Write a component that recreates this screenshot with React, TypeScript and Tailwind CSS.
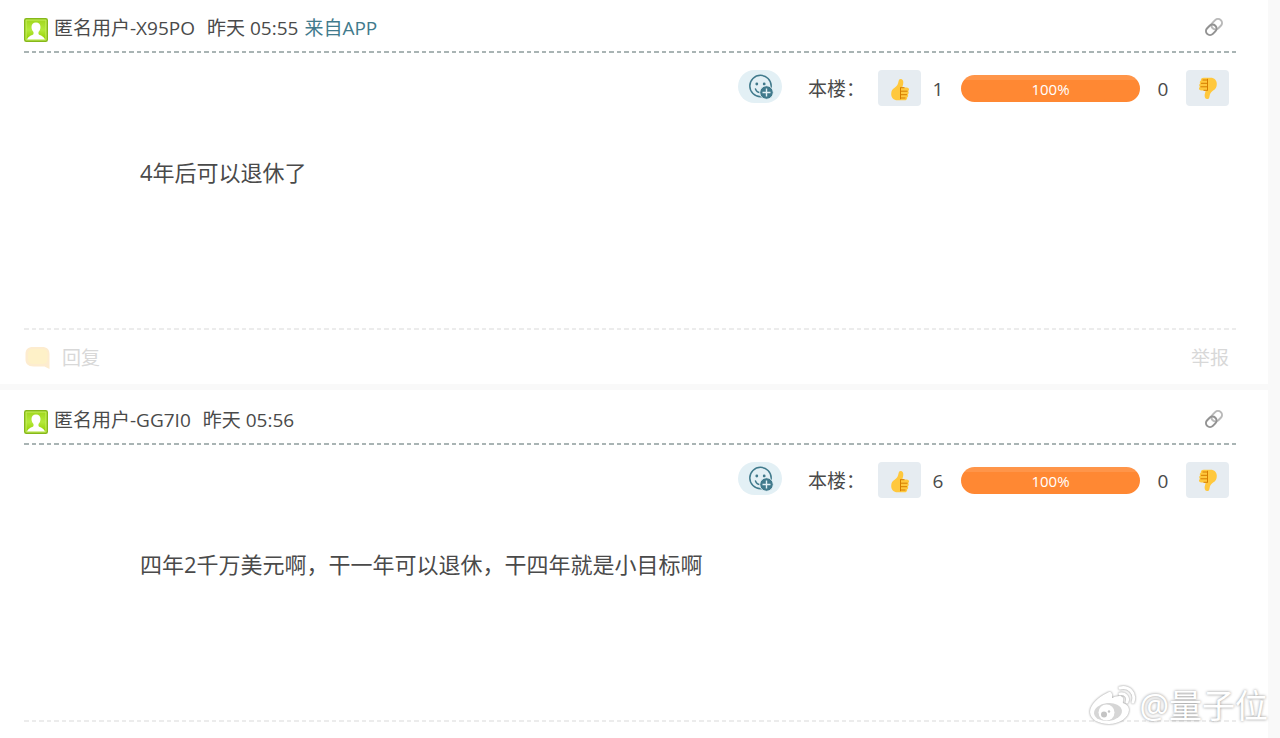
interface Post {
  user: string;
  time: string;
  source?: string;
  up: number;
  down: number;
  content: string;
}

const posts: Post[] = [
  { user: "匿名用户-X95PO", time: "昨天 05:55", source: "来自APP", up: 1, down: 0, content: "4年后可以退休了" },
  { user: "匿名用户-GG7I0", time: "昨天 05:56", up: 6, down: 0, content: "四年2千万美元啊，干一年可以退休，干四年就是小目标啊" },
];

function AvatarIcon() {
  return (
    <svg viewBox="0 0 24 24" className="size-6 shrink-0" aria-hidden="true">
      <defs>
        <linearGradient id="avatar-bg" x1="0" y1="0" x2="0" y2="1">
          <stop offset="0" stopColor="#a2d820" />
          <stop offset="0.5" stopColor="#b4e93a" />
          <stop offset="1" stopColor="#93d000" />
        </linearGradient>
      </defs>
      <rect x="0.75" y="0.75" width="22.5" height="22.5" rx="1.5" fill="#c9f25e" stroke="#86b81a" strokeWidth="1.5" />
      <rect x="2.5" y="2.5" width="19" height="19" fill="url(#avatar-bg)" />
      <path
        d="M12 4.500c-2.900 0-4.500 1.900-4.500 4.600 0 2.200.9 4 2 5v1.800c-.8 1.500-5.200 1.400-6.500 5.600h18c-1.300-4.200-5.700-4.100-6.500-5.600v-1.800c1.100-1 2-2.800 2-5 0-2.700-1.600-4.600-4.500-4.600z"
        fill="#fff"
      />
    </svg>
  );
}

function LinkIcon() {
  return (
    <svg viewBox="0 0 20 20" className="size-5" fill="none" strokeWidth="2" aria-hidden="true">
      <rect x="7" y="3.200" width="11.500" height="8" rx="4" transform="rotate(-45 12.750 7.200)" stroke="#b9b9b9" />
      <rect x="1.500" y="8.800" width="11.500" height="8" rx="4" transform="rotate(-45 7.250 12.800)" stroke="#929292" />
    </svg>
  );
}

function SmileIcon() {
  return (
    <svg viewBox="0 0 26 26" className="size-[26px]" fill="none" aria-hidden="true">
      <circle cx="12.500" cy="12" r="10.700" stroke="#417a8c" strokeWidth="1.500" />
      <circle cx="8.800" cy="10" r="1.400" fill="#417a8c" />
      <circle cx="16.200" cy="10" r="1.400" fill="#417a8c" />
      <path d="M7.500 15c.8 2.200 2.400 3.400 4.500 3.400" stroke="#417a8c" strokeWidth="1.500" strokeLinecap="round" />
      <circle cx="18.500" cy="18.500" r="6.800" fill="#417a8c" stroke="#e3f0f5" strokeWidth="1" />
      <path d="M18.500 14.500v8M14.500 18.500h8" stroke="#e3f0f5" strokeWidth="1.400" />
    </svg>
  );
}

function ThumbUpIcon() {
  return (
    <svg viewBox="0 0 20 24" className="h-6 w-5" aria-hidden="true">
      <path
        d="M1.200 16c0-3.600 1.300-5 3.700-6.600 2.200-1.500 3.200-3.200 3.600-5.900.3-2 1.200-2.700 2.500-2.500 2.300.4 2.700 3 2.100 5.300l-.8 3.100h4.200c1.900 0 2.700 1.200 2.500 2.300-.1.700-.4 1.100-.9 1.400.9.900.9 2.500-.2 3.300.6 1.100.2 2.400-.8 3 .3 1.600-.8 2.900-2.800 2.900H7.500c-4 0-6.300-2.600-6.300-6.300z"
        fill="#ffc83d"
      />
      <path d="M10.500 9.400v11.800M10.500 9.700h4M10.500 13.200h7M10.500 16.700h6.500M10.500 20h5" fill="none" stroke="#d67d00" strokeWidth="1" />
    </svg>
  );
}

// Mirrored upside down, so the fingers stay on the left
function ThumbDownIcon() {
  return (
    <span className="rotate-180">
      <ThumbUpIcon />
    </span>
  );
}

function CommentIcon() {
  return (
    <svg viewBox="0 0 26 24" className="h-6 w-[26px]" aria-hidden="true">
      <path d="M9 1h9c5 0 7.500 2.500 7.500 7v15l-5-2.500H9.500c-5.500 0-8-3-8-7V8C1.500 3.500 4 1 9 1z" fill="#fdeccf" />
      <path d="M9.500 3h8.500c3.800 0 5.500 1.700 5.500 5v5c0 3.300-1.700 5-5.500 5H9.500C5.800 18 4 16.300 4 13V8c0-3.300 1.800-5 5.500-5z" fill="#fef1c8" />
    </svg>
  );
}

function DashedLine({ light }: { light?: boolean }) {
  const color = light ? "text-[#ececec]" : "text-[#a9b4b4]";
  return (
    <div
      className={`h-0.5 bg-[linear-gradient(90deg,currentColor_5px,transparent_5px_8px,currentColor_8px_12px,transparent_12px)] bg-[length:15px_100%] ${color}`}
    />
  );
}

function PostItem({ post }: { post: Post }) {
  return (
    <article className="bg-white pl-6 pr-[30px]">
      <header className="flex h-[53px] items-center gap-1.5 pt-1.5">
        <span className="pt-1">
          <AvatarIcon />
        </span>
        <span className="flex flex-1 items-center">
          <span className="mr-3">{post.user}</span>
          <time>{post.time}</time>
          {post.source && (
            <a href="#app" className="ml-1.5 text-[#417a8c]">
              {post.source}
            </a>
          )}
        </span>
        <a href="#link" aria-label="链接" className="mr-3.5 pb-0.5">
          <LinkIcon />
        </a>
      </header>
      <DashedLine />

      <div className="flex h-[68px] items-start justify-end pr-[9px] pt-[17px]">
        <button type="button" aria-label="添加表情" className="flex h-[33px] w-11 items-center justify-center rounded-full bg-[#e3f0f5] pl-0.5">
          <SmileIcon />
        </button>
        <span className="ml-[26px] flex h-9 w-[70px] items-center pt-0.5">本楼：</span>
        <button type="button" aria-label="赞" className="flex h-9 w-[43px] items-center justify-center rounded bg-[#e6ecf1] pt-1">
          <ThumbUpIcon />
        </button>
        <span className="flex h-9 w-10 items-center justify-center pr-1.5 pt-0.5">{post.up}</span>
        <div className="mt-[5px] flex h-[27px] w-[179px] items-center justify-center rounded-full bg-[#ff8833] bg-linear-to-b from-[#ff9549] from-20% to-[#ff8833] to-20% text-[15px] text-white">
          100%
        </div>
        <span className="flex h-9 w-[46px] items-center justify-center pt-0.5">{post.down}</span>
        <button type="button" aria-label="踩" className="flex h-9 w-[43px] items-center justify-center rounded bg-[#e6ecf1]">
          <ThumbDownIcon />
        </button>
      </div>

      <p className="min-h-[207px] pl-[116px] pt-[34px] text-[22px] leading-[34px]">{post.content}</p>

      <DashedLine light />
      <footer className="flex h-[54px] items-center justify-between pr-[9px] pt-0.5 leading-5 text-[#d8d8d8]">
        <a href="#reply" className="flex items-center gap-3">
          <CommentIcon />
          回复
        </a>
        <a href="#report">举报</a>
      </footer>
    </article>
  );
}

function Watermark() {
  return (
    <div className="absolute bottom-2.5 right-3 flex items-center gap-0.5 text-white">
      <svg viewBox="0 0 48 42" className="h-[42px] w-12 drop-shadow-[0_0_1px_#888]" aria-hidden="true">
        <path
          d="M18 8c3-2 6-1 5 5 4-2 10-3 11 0 .6 2-.5 4 0 5 3 1 6 3 6 7 0 7-9 14-20 14C9 39 1 34 1 27 1 20 9 12 18 8z"
          fill="#fff"
        />
        <ellipse cx="19" cy="27" rx="14" ry="9" fill="#d6d6d6" transform="rotate(-6 19 27)" />
        <circle cx="17.500" cy="27.500" r="8" fill="#fff" />
        <circle cx="15" cy="29.500" r="3" fill="#c4c4c4" />
        <circle cx="20" cy="26.500" r="1.200" fill="#c4c4c4" />
        <path d="M31 3c9-2 16 5 13 14M31 9c5-1 9 3 7 8" fill="none" stroke="#fff" strokeWidth="3" strokeLinecap="round" />
      </svg>
      <span className="text-[33px] leading-[44px] [text-shadow:0_0_3px_#888]">@量子位</span>
    </div>
  );
}

export default function App() {
  return (
    <div className="relative h-screen overflow-hidden bg-[#f9f9f9] pr-3 font-['Open_Sans','Noto_Sans_CJK_SC',sans-serif] text-[19px] leading-7 text-[#4a4a4a]">
      <main className="-mt-0.5 flex flex-col gap-1.5">
        {posts.map((post) => (
          <PostItem key={post.user} post={post} />
        ))}
      </main>
      <Watermark />
    </div>
  );
}
